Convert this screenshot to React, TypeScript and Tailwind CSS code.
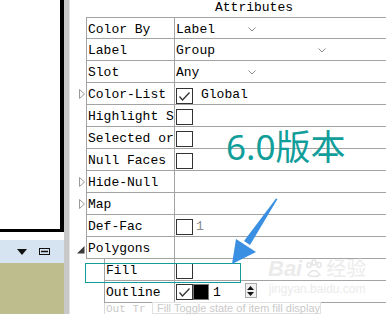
import React from 'react';

const mono = { fontFamily: '"Liberation Mono", "DejaVu Sans Mono", monospace' };

const Chevron: React.FC = () => (
  <svg width="8" height="5" viewBox="0 0 8 5" className="shrink-0">
    <polyline points="0.5,0.5 4,4 7.5,0.5" fill="none" stroke="#8a8a8a" strokeWidth="1" />
  </svg>
);

const CheckBox: React.FC<{ checked?: boolean }> = ({ checked }) => (
  <div className="w-[17px] h-[16px] border border-[#333] bg-white flex items-center justify-center shrink-0">
    {checked && (
      <svg width="13" height="11" viewBox="0 0 13 11">
        <polyline points="1.5,5.5 4.5,9 11.5,1.5" fill="none" stroke="#333" strokeWidth="1.3" />
      </svg>
    )}
  </div>
);

type RowProps = {
  label: string;
  expander?: 'closed' | 'open';
  indent?: boolean;
  first?: boolean;
  children?: React.ReactNode;
};

// one property row of the attributes grid
const Row: React.FC<RowProps> = ({ label, expander, indent, first, children }) => (
  <div className="flex h-[22px] shrink-0">
    <div className="w-[16px] shrink-0 flex items-center justify-end pr-[1px]">
      {expander === 'closed' && (
        <svg width="6" height="10" viewBox="0 0 6 10">
          <polygon points="0.5,0.5 5.5,5 0.5,9.5" fill="none" stroke="#9a9a9a" strokeWidth="1" />
        </svg>
      )}
      {expander === 'open' && (
        <svg width="8" height="8" viewBox="0 0 8 8" className="mt-[4px]">
          <polygon points="7.5,0 7.5,7.5 0,7.5" fill="#3a3a3a" />
        </svg>
      )}
    </div>
    {indent && <div className="w-[18px] shrink-0" />}
    <div
      className={`flex flex-1 border-b border-[#a3a3a3] ${first ? 'border-t' : ''}`}
    >
      <div
        className={`${indent ? 'w-[71px]' : 'w-[89px]'} shrink-0 border-l border-r border-[#a3a3a3] overflow-hidden whitespace-nowrap pl-[1px] pt-[4px] text-[13px] leading-[16px] text-black`}
        style={mono}
      >
        {label}
      </div>
      <div className="flex-1 flex items-center pl-[1px] text-[13px] text-black" style={mono}>
        {children}
      </div>
    </div>
  </div>
);

const App: React.FC = () => {
  return (
    <div className="w-[386px] h-[314px] relative overflow-hidden bg-white flex">
      {/* left docked panel */}
      <div className="w-[64px] shrink-0 flex flex-col">
        <div className="h-[232px] shrink-0 border-r-4 border-b-[3px] border-black bg-white" />
        <div className="h-[8px] shrink-0 bg-white" />
        <div className="h-[23px] shrink-0 bg-[#d6e3f1] flex items-center">
          <svg width="10" height="6" viewBox="0 0 10 6" className="ml-[17px]">
            <polygon points="0,0 10,0 5,6" fill="#111" />
          </svg>
          <svg width="11" height="7" viewBox="0 0 11 7" className="ml-[12px]">
            <rect x="0.5" y="0.5" width="10" height="6" fill="none" stroke="#111" strokeWidth="1" />
            <line x1="2" y1="3.5" x2="9" y2="3.5" stroke="#111" strokeWidth="1.5" />
          </svg>
        </div>
        <div className="flex-1 bg-[#bebd8e]" />
      </div>

      {/* splitter */}
      <div className="w-[5px] shrink-0 bg-[#c8c8c8]" />
      <div className="w-[1px] shrink-0 bg-[#e2e2e2]" />

      {/* attributes panel */}
      <div className="flex-1 flex flex-col overflow-hidden">
        <div className="h-[17px] shrink-0 pl-[145px] pt-[1px] text-[13px] leading-[14px] text-black" style={mono}>
          Attributes
        </div>
        <Row label="Color By" first>
          <span className="pt-[3px]">Label</span>
          <span className="ml-[33px] mt-[2px]"><Chevron /></span>
        </Row>
        <Row label="Label">
          <span className="pt-[3px]">Group</span>
          <span className="ml-[103px] mt-[2px]"><Chevron /></span>
        </Row>
        <Row label="Slot">
          <span className="pt-[3px]">Any</span>
          <span className="ml-[49px] mt-[2px]"><Chevron /></span>
        </Row>
        <Row label="Color-List" expander="closed">
          <div className="self-start mt-[5px]"><CheckBox checked /></div>
          <span className="ml-[8px] pt-[3px]">Global</span>
        </Row>
        <Row label="Highlight S">
          <div className="self-start mt-[4px]"><CheckBox /></div>
        </Row>
        <Row label="Selected or">
          <div className="self-start mt-[4px]"><CheckBox /></div>
        </Row>
        <Row label="Null Faces">
          <div className="self-start mt-[4px]"><CheckBox /></div>
        </Row>
        <Row label="Hide-Null" expander="closed" />
        <Row label="Map" expander="closed" />
        <Row label="Def-Fac">
          <div className="self-start mt-[4px]"><CheckBox /></div>
          <span className="ml-[3px] pt-[3px] text-[#8a8a8a]">1</span>
        </Row>
        <Row label="Polygons" expander="open" />
        <Row label="Fill" indent>
          <div className="self-start mt-[4px]"><CheckBox /></div>
        </Row>
        <Row label="Outline" indent>
          <div className="self-start mt-[3px]"><CheckBox checked /></div>
          <div className="self-start mt-[3px] w-[16px] h-[16px] bg-black border border-[#777]" />
          <span className="ml-[4px] pt-[3px]">1</span>
          <div className="self-start mt-[2px] ml-[24px] w-[12px] h-[15px] border border-[#aaa] bg-[#f0f0f0] flex flex-col items-center justify-center gap-[2px]">
            <svg width="7" height="4" viewBox="0 0 7 4"><polygon points="0,4 7,4 3.5,0" fill="#111" /></svg>
            <svg width="7" height="4" viewBox="0 0 7 4"><polygon points="0,0 7,0 3.5,4" fill="#111" /></svg>
          </div>
        </Row>
        <div className="flex h-[11px] shrink-0 opacity-40">
          <div className="w-[34px] shrink-0" />
          <div className="w-[71px] shrink-0 border-l border-[#a3a3a3] pl-[1px] pt-[1px] text-[11px] leading-[10px] text-[#777] whitespace-nowrap overflow-hidden" style={mono}>
            Out  Tr
          </div>
        </div>
      </div>

      {/* teal highlight around Fill row */}
      <div className="absolute left-[85px] top-[263px] w-[156px] h-[20px] border-[1.5px] border-[#159c98]" />

      {/* fading tooltip */}
      <div
        className="absolute left-[152px] top-[302px] h-[12px] pl-[4px] bg-white/70 border border-[#e2e2e2] text-[11px] leading-[10px] text-[#cacaca] whitespace-nowrap"
        style={{ fontFamily: '"Liberation Sans", Arial, sans-serif' }}
      >
        Fill  Toggle state of item fill display
      </div>

      {/* big annotation */}
      <div
        className="absolute left-[226px] top-[127px] text-[35px] leading-[40px] text-[#119e9a]"
        style={{ fontFamily: '"Noto Sans", "Noto Sans CJK SC", sans-serif' }}
      >
        6.0版本
      </div>

      {/* blue arrow */}
      <svg className="absolute left-0 top-0 pointer-events-none" width="386" height="314" viewBox="0 0 386 314">
        <polygon points="277.5,199 276,198.5 244,241 250,245" fill="#3b8fe2" />
        <polygon points="232,264 236,239 256,252" fill="#3b8fe2" />
      </svg>

      {/* watermark */}
      <div className="absolute left-[268px] top-[256px] flex flex-col items-center pointer-events-none text-[#ebebeb]">
        <div className="flex items-center gap-[2px]" style={{ fontFamily: '"Liberation Sans", Arial, "Noto Sans CJK SC", sans-serif' }}>
          <span className="text-[22px] leading-[26px] font-bold italic">Bai</span>
          <svg width="20" height="20" viewBox="0 0 20 20">
            <ellipse cx="5" cy="6" rx="2" ry="2.5" fill="none" stroke="#e6e6e6" strokeWidth="1.5" />
            <ellipse cx="10" cy="3.5" rx="2" ry="2.5" fill="none" stroke="#e6e6e6" strokeWidth="1.5" />
            <ellipse cx="15" cy="6" rx="2" ry="2.5" fill="none" stroke="#e6e6e6" strokeWidth="1.5" />
            <path d="M4 16 Q10 7 16 16 Q10 19 4 16 Z" fill="none" stroke="#e6e6e6" strokeWidth="1.5" />
          </svg>
          <span className="text-[20px] leading-[26px]">经验</span>
        </div>
        <span className="text-[12px] leading-[14px]" style={{ fontFamily: '"Liberation Sans", Arial, sans-serif' }}>
          jingyan.baidu.com
        </span>
      </div>
    </div>
  );
};

export default App;
